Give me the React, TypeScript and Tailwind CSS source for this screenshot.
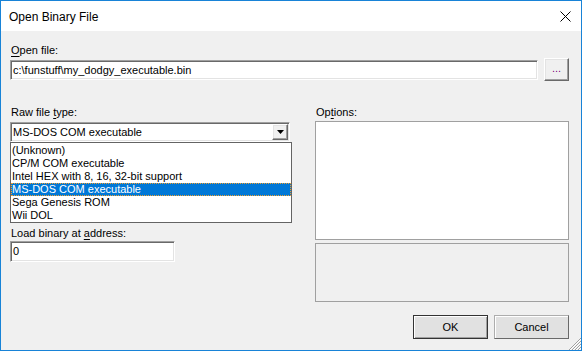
import React from 'react';

const sunken =
  'bg-white border border-t-[#a0a0a0] border-l-[#a0a0a0] border-b-white border-r-white shadow-[inset_1px_1px_0_#696969,inset_-1px_-1px_0_#e3e3e3]';
const raised =
  'bg-[#f0f0f0] border border-t-white border-l-white border-b-[#696969] border-r-[#696969] shadow-[inset_-1px_-1px_0_#a0a0a0,inset_1px_1px_0_#e3e3e3]';

const items = [
  '(Unknown)',
  'CP/M COM executable',
  'Intel HEX with 8, 16, 32-bit support',
  'MS-DOS COM executable',
  'Sega Genesis ROM',
  'Wii DOL',
];

function Label({ pre, u, post }: { pre: string; u: string; post: string }) {
  return (
    <div className="h-[13px] leading-[13px] pl-[1px]">
      {pre}
      <span className="underline underline-offset-[2px]">{u}</span>
      {post}
    </div>
  );
}

export default function App() {
  return (
    <div className="w-[582px] h-[351px] border border-[#1883d7] flex flex-col text-[11px] text-black font-['Liberation_Sans',Arial,sans-serif] overflow-hidden">
      {/* title bar */}
      <div className="h-[30px] bg-white flex items-center justify-between pl-[8px] pr-[10px]">
        <span className="text-[12px] mt-[1px]">Open Binary File</span>
        <svg width="11" height="11" viewBox="0 0 11 11" className="mt-[1px]">
          <path d="M0.5 0.5 L10.5 10.5 M10.5 0.5 L0.5 10.5" stroke="#000" strokeWidth="1" />
        </svg>
      </div>

      {/* body */}
      <div className="flex-1 bg-[#f0f0f0] flex flex-col pl-[9px] pr-[12px] pt-[13px] relative">
        <Label pre="" u="O" post="pen file:" />
        <div className="flex items-start mt-[1px]">
          <div className={`w-[529px] h-[20px] mt-[2px] ${sunken} flex items-center pl-[2px]`}>
            c:\funstuff\my_dodgy_executable.bin
          </div>
          <div className={`ml-[6px] w-[25px] h-[23px] ${raised} flex items-center justify-center`}>
            <span className="text-[#800080] leading-none -mt-[2px]">...</span>
          </div>
        </div>

        <div className="flex mt-[25px]">
          {/* left column */}
          <div className="w-[282px] flex flex-col">
            <Label pre="Raw file " u="t" post="ype:" />
            <div className="relative mt-[3px]">
              <div className={`w-[280px] h-[20px] ${sunken} flex items-center justify-between pl-[2px] pr-[1px]`}>
                <span>MS-DOS COM executable</span>
                <div className={`w-[16px] h-[16px] ${raised} flex items-center justify-center`}>
                  <svg width="7" height="4" viewBox="0 0 7 4">
                    <path d="M0 0 H7 L3.5 4 Z" fill="#000" />
                  </svg>
                </div>
              </div>
              {/* open dropdown list */}
              <div className="absolute left-0 top-[20px] w-[282px] h-[81px] bg-white border border-[#646464] pt-[1px] z-10">
                {items.map((it) =>
                  it === 'MS-DOS COM executable' ? (
                    <div
                      key={it}
                      className="h-[13px] leading-[12px] pl-[1px] bg-[#0078d7] text-white outline-1 outline-dotted outline-[#f0a030] -outline-offset-1"
                    >
                      {it}
                    </div>
                  ) : (
                    <div key={it} className="h-[13px] leading-[12px] pl-[1px]">
                      {it}
                    </div>
                  )
                )}
              </div>
            </div>
            <div className="mt-[85px]">
              <Label pre="Load binary at " u="a" post="ddress:" />
            </div>
            <div className={`w-[165px] h-[21px] mt-[1px] ${sunken} flex items-center pl-[2px]`}>0</div>
          </div>

          {/* right column */}
          <div className="ml-[23px] w-[254px] flex flex-col">
            <Label pre="Op" u="t" post="ions:" />
            <div className="mt-[2px] h-[119px] bg-white border border-[#a0a0a0]" />
            <div className="mt-[3px] h-[59px] border border-[#a0a0a0]" />
          </div>
        </div>

        <div className="flex justify-end gap-[6px] mt-[13px]">
          <button className="w-[75px] h-[24px] bg-[#e1e1e1] border border-[#333] shadow-[inset_1px_1px_0_#fff,inset_-1px_-1px_0_#a0a0a0]">
            OK
          </button>
          <button className="w-[75px] h-[24px] bg-[#e1e1e1] border border-[#adadad] border-b-[#696969] border-r-[#696969] shadow-[inset_1px_1px_0_#fff]">
            Cancel
          </button>
        </div>

        {/* size grip */}
        <svg width="13" height="13" viewBox="0 0 13 13" className="absolute right-0 bottom-0">
          {[3, 6, 9, 12].map((k) => (
            <g key={k}>
              <line x1={13 - k} y1={13} x2={13} y2={13 - k} stroke="#a0a0a0" strokeWidth="1" />
              <line x1={14 - k} y1={13} x2={13} y2={14 - k} stroke="#ffffff" strokeWidth="1" />
            </g>
          ))}
        </svg>
      </div>
    </div>
  );
}
